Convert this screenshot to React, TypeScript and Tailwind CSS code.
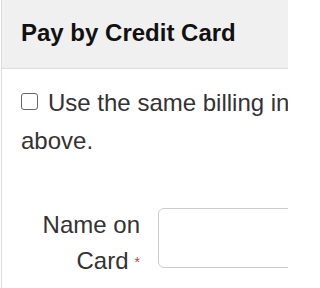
export default function App() {
  return (
    <div className="h-[288px] w-[288px] overflow-hidden bg-white font-['Liberation_Sans',Arial,sans-serif]">
      <div className="ml-px h-full border-l border-[#dddddd]">
        <div className="h-[69px] border-b border-[#dddddd] bg-[#f0f0f0] pl-[19px] pt-[19px]">
          <h3 className="whitespace-nowrap text-[24px] font-bold leading-[28px] text-[#111111]">
            Pay by Credit Card
          </h3>
        </div>

        <div className="pl-[19px] pt-[15px]">
          <label className="block w-[460px] text-[24px] leading-[38px] text-[#333333]">
            <span className="mb-[1px] mr-[10px] inline-block h-[17px] w-[17px] rounded-[3px] border-[1.5px] border-[#666666] align-baseline" />
            Use the same billing information as above.
          </label>

          <div className="mt-[47px] flex">
            <div className="w-[119px] shrink-0 text-right text-[24px] leading-[36px] text-[#333333]">
              Name on Card<span className="relative -top-[2px] ml-[6px] text-[14px] text-[#e0303a]">*</span>
            </div>
            <div className="ml-[18px] mt-[1px] h-[60px] w-[200px] shrink-0 rounded-[6px] border border-[#cccccc] bg-white" />
          </div>
        </div>
      </div>
    </div>
  );
}
